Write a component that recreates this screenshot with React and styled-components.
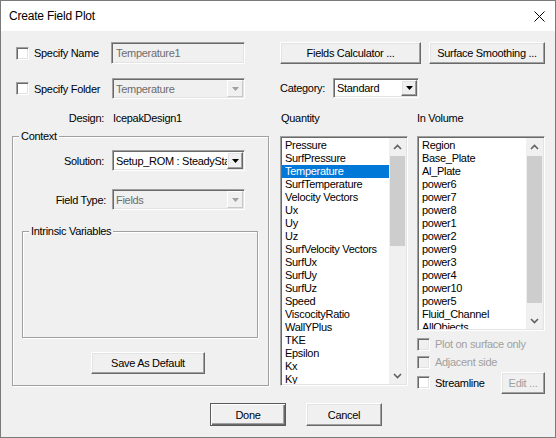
import React from 'react'
import styled, { createGlobalStyle, css } from 'styled-components'

const GlobalStyle = createGlobalStyle`
  html, body {
    margin: 0;
    padding: 0;
    background: #f0f0f0;
  }
  body {
    font-family: "Liberation Sans", Arial, sans-serif;
  }
  * {
    box-sizing: border-box;
  }
`

const sunken = css`
  border: 1px solid;
  border-color: #a0a0a0 #ffffff #ffffff #a0a0a0;
  box-shadow: inset 1px 1px #696969, inset -1px -1px #e3e3e3;
`

const raised = css`
  border: 1px solid;
  border-color: #ffffff #696969 #696969 #ffffff;
  box-shadow: inset -1px -1px #a0a0a0, inset 1px 1px #e3e3e3;
`

const Window = styled.div`
  width: 556px;
  height: 438px;
  border: 1px solid #7a7a7a;
  background: #f0f0f0;
  display: flex;
  flex-direction: column;
  font-size: 11px;
  letter-spacing: -0.3px;
  color: #000;
`

const TitleBar = styled.div`
  height: 30px;
  background: #fff;
  display: flex;
  align-items: center;
  justify-content: space-between;
  padding: 0 10px 0 8px;
  font-size: 12px;
  letter-spacing: -0.2px;
`

const Body = styled.div`
  display: flex;
  flex-direction: column;
  padding: 11px 10px 0 11px;
`

const Main = styled.div`
  display: flex;
  gap: 11px;
  height: 353px;
`

const Column = styled.div`
  width: ${(p) => p.w}px;
  display: flex;
  flex-direction: column;
`

const Row = styled.div`
  display: flex;
  align-items: center;
  height: ${(p) => p.h}px;
  margin-top: ${(p) => p.mt || 0}px;
  margin-left: ${(p) => p.ml || 0}px;
  gap: ${(p) => p.gap || 0}px;
`

const CheckCell = styled.label`
  width: ${(p) => p.w}px;
  padding-left: ${(p) => (p.indent === undefined ? 4 : p.indent)}px;
  display: flex;
  align-items: center;
  gap: 5px;
  color: ${(p) => (p.disabled ? '#a0a0a0' : '#000')};
  white-space: nowrap;
`

const Box = styled.span`
  ${sunken}
  width: 13px;
  height: 13px;
  flex: none;
  background: ${(p) => (p.disabled ? '#f0f0f0' : '#fff')};
`

const FieldLabel = styled.div`
  width: ${(p) => p.w}px;
  text-align: ${(p) => p.align || 'right'};
  padding-left: ${(p) => p.pl || 0}px;
  white-space: nowrap;
`

const Value = styled.div`
  margin-left: ${(p) => p.ml || 0}px;
  white-space: nowrap;
`

const TextBox = styled.div`
  ${sunken}
  width: ${(p) => p.w}px;
  height: 22px;
  background: #f0f0f0;
  color: #6d6d6d;
  padding-left: 4px;
  display: flex;
  align-items: center;
`

const ComboWrap = styled.div`
  ${sunken}
  width: ${(p) => p.w}px;
  height: ${(p) => p.h || 21}px;
  margin-left: ${(p) => p.ml || 0}px;
  padding: 1px;
  display: flex;
  background: ${(p) => (p.disabled ? '#f0f0f0' : '#fff')};
  color: ${(p) => (p.disabled ? '#6d6d6d' : '#000')};
`

const ComboText = styled.div`
  flex: 1;
  min-width: 0;
  overflow: hidden;
  white-space: nowrap;
  padding-left: 2px;
  display: flex;
  align-items: center;
`

const DropButton = styled.div`
  width: 16px;
  flex: none;
  background: #f0f0f0;
  display: flex;
  align-items: center;
  justify-content: center;
  ${(p) =>
    p.disabled
      ? css`
          border: 1px solid;
          border-color: #ffffff #c8c8c8 #c8c8c8 #ffffff;
        `
      : raised}
`

const Button = styled.button`
  ${raised}
  width: ${(p) => p.w}px;
  height: ${(p) => p.h || 22}px;
  margin-left: ${(p) => p.ml || 0}px;
  padding: 0;
  background: #f0f0f0;
  font: inherit;
  letter-spacing: inherit;
  color: ${(p) => (p.disabled ? '#a0a0a0' : '#000')};
  flex: none;
  align-self: flex-start;
  ${(p) =>
    p.primary &&
    css`
      border: 1px solid #5a5a5a;
      box-shadow: inset 1px 1px #fff, inset -1px -1px #696969, inset -2px -2px #a0a0a0;
    `}
`

const GroupBox = styled.div`
  border: 1px solid #a0a0a0;
  box-shadow: inset 1px 1px #fff, 1px 1px #fff;
  display: flex;
  flex-direction: column;
  margin-top: ${(p) => p.mt || 0}px;
  margin-left: ${(p) => p.ml || 0}px;
  width: ${(p) => (p.w ? `${p.w}px` : 'auto')};
  height: ${(p) => (p.h ? `${p.h}px` : 'auto')};
  padding-bottom: ${(p) => p.pb || 0}px;
`

const Legend = styled.div`
  align-self: flex-start;
  margin: -7px 0 0 6px;
  padding: 0 2px;
  line-height: 13px;
  background: #f0f0f0;
`

const ListBox = styled.div`
  ${sunken}
  height: ${(p) => p.h}px;
  background: #fff;
  display: flex;
  padding: 1px;
`

const Items = styled.div`
  flex: 1;
  min-width: 0;
  overflow: hidden;
  padding-top: 1px;
`

const Item = styled.div`
  height: 13px;
  line-height: 13px;
  padding-left: 3px;
  white-space: nowrap;
  background: ${(p) => (p.selected ? '#0078d7' : 'transparent')};
  color: ${(p) => (p.selected ? '#fff' : '#000')};
`

const Scrollbar = styled.div`
  width: 17px;
  flex: none;
  background: #f0f0f0;
  display: flex;
  flex-direction: column;
`

const Arrow = styled.div`
  height: 17px;
  flex: none;
  display: flex;
  align-items: center;
  justify-content: center;
`

const Thumb = styled.div`
  margin: 1px 1px 0;
  background: #cdcdcd;
  flex: none;
`

const Spacer = styled.div`
  flex: 1;
`

const Footer = styled.div`
  display: flex;
  gap: 20px;
  margin-top: 8px;
  padding-left: 198px;
`

const Chevron = ({ down }) => (
  <svg width="9" height="6" viewBox="0 0 9 6">
    <polyline
      points={down ? '1,1 4.5,4.5 8,1' : '1,5 4.5,1.5 8,5'}
      fill="none"
      stroke="#606060"
      strokeWidth="1.6"
    />
  </svg>
)

const Triangle = ({ color }) => (
  <svg width="7" height="4" viewBox="0 0 7 4">
    <polygon points="0,0 7,0 3.5,4" fill={color} />
  </svg>
)

const Combo = ({ w, h, ml, disabled, children }) => (
  <ComboWrap w={w} h={h} ml={ml} disabled={disabled}>
    <ComboText>{children}</ComboText>
    <DropButton disabled={disabled}>
      <Triangle color={disabled ? '#a0a0a0' : '#000'} />
    </DropButton>
  </ComboWrap>
)

const List = ({ h, items, selected, thumb }) => (
  <ListBox h={h}>
    <Items>
      {items.map((it) => (
        <Item key={it} selected={it === selected}>
          {it}
        </Item>
      ))}
    </Items>
    <Scrollbar>
      <Arrow>
        <Chevron />
      </Arrow>
      <Thumb style={{ height: thumb }} />
      <Spacer />
      <Arrow>
        <Chevron down />
      </Arrow>
    </Scrollbar>
  </ListBox>
)

const Check = ({ w, indent, disabled, children }) => (
  <CheckCell w={w} indent={indent} disabled={disabled}>
    <Box disabled={disabled} />
    {children}
  </CheckCell>
)

const quantities = [
  'Pressure',
  'SurfPressure',
  'Temperature',
  'SurfTemperature',
  'Velocity Vectors',
  'Ux',
  'Uy',
  'Uz',
  'SurfVelocity Vectors',
  'SurfUx',
  'SurfUy',
  'SurfUz',
  'Speed',
  'ViscocityRatio',
  'WallYPlus',
  'TKE',
  'Epsilon',
  'Kx',
  'Ky',
  'Kz',
]

const volumes = [
  'Region',
  'Base_Plate',
  'Al_Plate',
  'power6',
  'power7',
  'power8',
  'power1',
  'power2',
  'power9',
  'power3',
  'power4',
  'power10',
  'power5',
  'Fluid_Channel',
  'AllObjects',
]

export default function App() {
  return (
    <>
      <GlobalStyle />
      <Window>
        <TitleBar>
          <span>Create Field Plot</span>
          <svg width="11" height="11" viewBox="0 0 11 11">
            <path d="M0.5 0.5 L10.5 10.5 M10.5 0.5 L0.5 10.5" stroke="#000" strokeWidth="1" />
          </svg>
        </TitleBar>
        <Body>
          <Main>
            <Column w={257}>
              <Row h={22}>
                <Check w={99}>Specify Name</Check>
                <TextBox w={134}>Temperature1</TextBox>
              </Row>
              <Row h={21} mt={14}>
                <Check w={100}>Specify Folder</Check>
                <Combo w={133} disabled>
                  Temperature
                </Combo>
              </Row>
              <Row h={16} mt={11}>
                <FieldLabel w={92}>Design:</FieldLabel>
                <Value ml={9}>IcepakDesign1</Value>
              </Row>
              <GroupBox mt={10} pb={11}>
                <Legend>Context</Legend>
                <Row h={21} mt={7}>
                  <FieldLabel w={91}>Solution:</FieldLabel>
                  <Combo w={133} ml={8}>
                    Setup_ROM : SteadyState
                  </Combo>
                </Row>
                <Row h={21} mt={18}>
                  <FieldLabel w={93}>Field Type:</FieldLabel>
                  <Combo w={133} ml={6} disabled>
                    Fields
                  </Combo>
                </Row>
                <GroupBox mt={21} ml={9} w={236} h={107}>
                  <Legend>Intrinsic Variables</Legend>
                </GroupBox>
                <Button w={114} ml={78} style={{ marginTop: 14 }}>
                  Save As Default
                </Button>
              </GroupBox>
            </Column>
            <Column w={265}>
              <Row h={22} gap={8}>
                <Button w={141}>Fields Calculator ...</Button>
                <Button w={116}>Surface Smoothing ...</Button>
              </Row>
              <Row h={20} mt={14}>
                <FieldLabel w={53} align="left">
                  Category:
                </FieldLabel>
                <Combo w={86} h={20}>
                  Standard
                </Combo>
              </Row>
              <Row h={16} mt={12}>
                <FieldLabel w={137} align="left" pl={1}>
                  Quantity
                </FieldLabel>
                <Value>In Volume</Value>
              </Row>
              <Row h={250} mt={10} gap={9} style={{ alignItems: 'flex-start' }}>
                <Column w={128}>
                  <List h={250} items={quantities} selected="Temperature" thumb={90} />
                </Column>
                <Column w={128}>
                  <List h={195} items={volumes} thumb={147} />
                  <Row h={18} mt={4}>
                    <Check indent={0} disabled>
                      Plot on surface only
                    </Check>
                  </Row>
                  <Row h={18}>
                    <Check indent={0} disabled>
                      Adjacent side
                    </Check>
                  </Row>
                  <Row h={23}>
                    <Check indent={0}>Streamline</Check>
                    <Button w={44} disabled style={{ marginLeft: 'auto', alignSelf: 'center' }}>
                      Edit ...
                    </Button>
                  </Row>
                </Column>
              </Row>
            </Column>
          </Main>
          <Footer>
            <Button w={76} h={23} primary>
              Done
            </Button>
            <Button w={76} h={23}>
              Cancel
            </Button>
          </Footer>
        </Body>
      </Window>
    </>
  )
}
